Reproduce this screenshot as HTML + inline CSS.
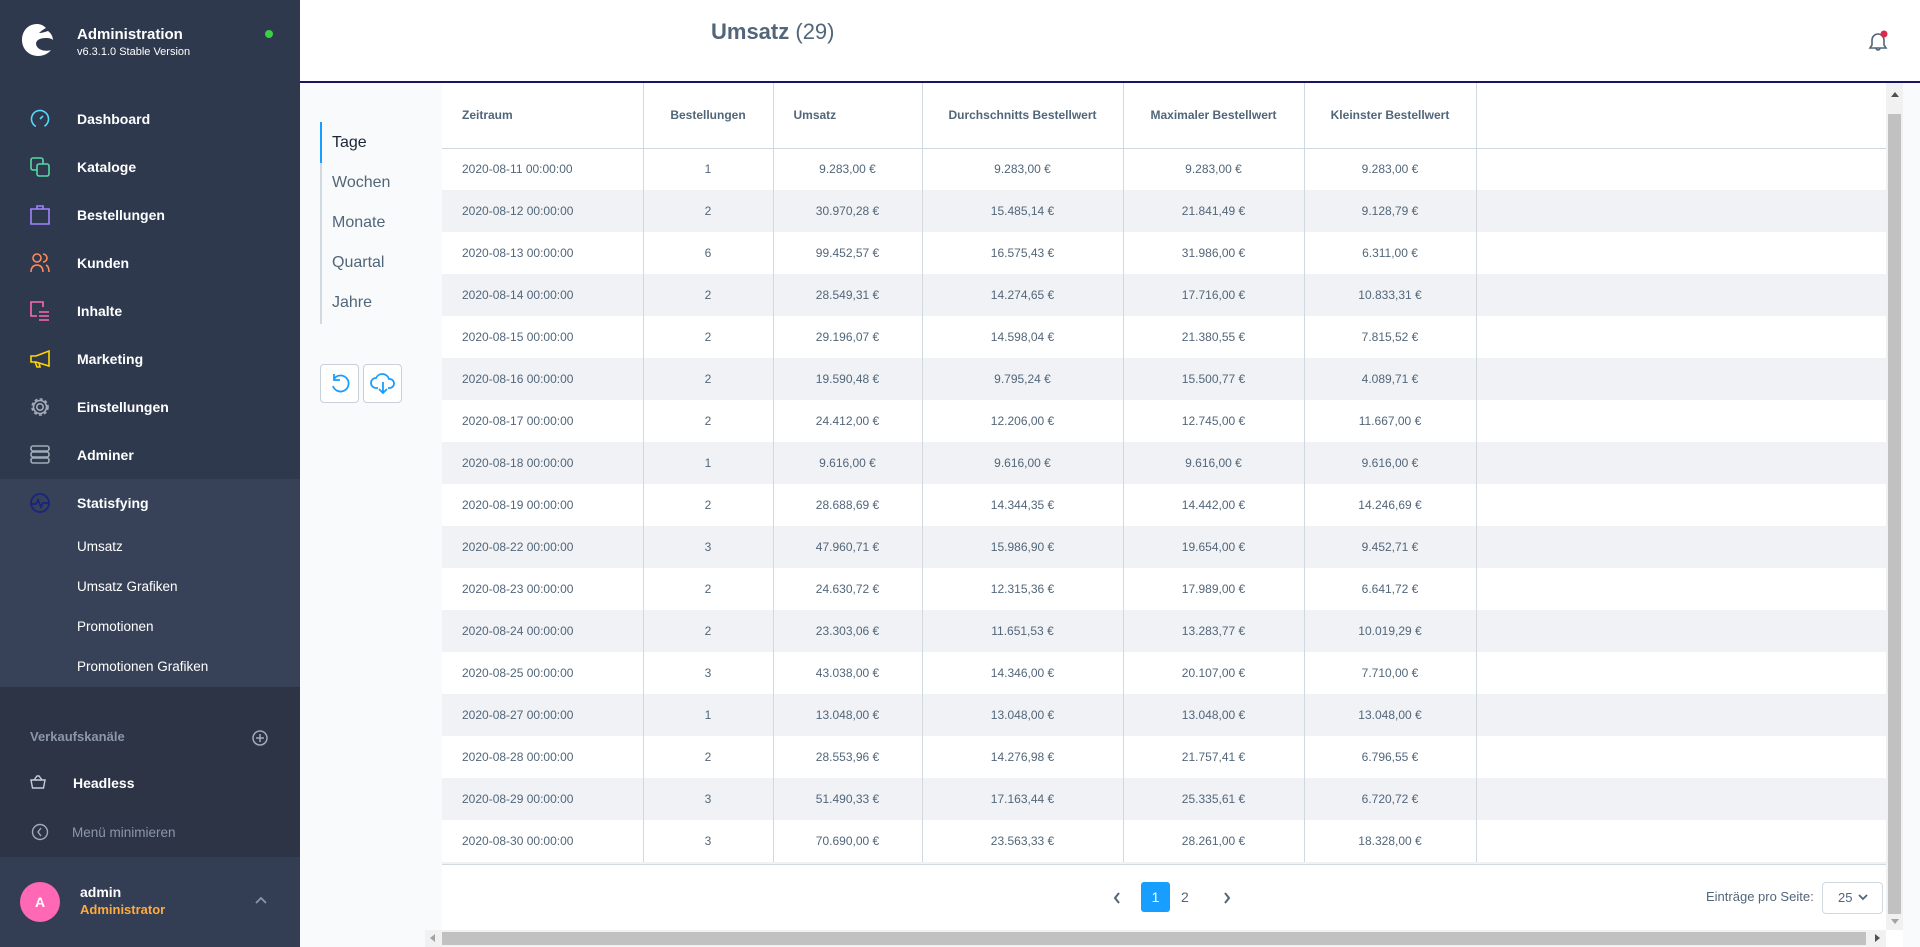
<!DOCTYPE html>
<html><head><meta charset="utf-8"><style>
*{box-sizing:border-box;margin:0;padding:0}
body{width:1920px;height:947px;overflow:hidden;font-family:"Liberation Sans",sans-serif;background:#fff;position:relative}
.sb{position:absolute;left:0;top:0;width:300px;height:947px;background:#2f394d}
.abs{position:absolute}
.mi{position:absolute;left:77px;color:#fff;font-weight:bold;font-size:14px;line-height:18px}
.ic{position:absolute;left:30px;width:20px;height:20px}
.sub{position:absolute;left:77px;color:#fff;font-size:13.5px}
table{border-collapse:collapse;table-layout:fixed}
td,th{height:42px;font-size:12px;color:#52667a;text-align:center;border-right:1px solid #d1d9e0;white-space:nowrap}
th{height:65px;font-weight:bold;border-bottom:1px solid #d1d9e0;font-size:12px}
td:first-child,th:first-child{text-align:left;padding-left:20px}
tr:nth-child(odd) td{background:#f0f2f5}
td:last-child,th:last-child{border-right:none}
.nav{position:absolute;left:332px;font-size:16px;color:#52667a}
</style></head><body>
<div class="sb">
 <svg class="abs" style="left:20px;top:22px" width="34" height="36" viewBox="0 0 34 36"><path d="M17 2C8 2 2 9 2 18s7 16 16 16c5 0 10-2 13-6-6 2-14 0-15-6 0-4 4-6 10-6 4 0 6 1 7 2 0-3-2-7-5-9-3 1-6 2-9 2 2-2 5-4 7-5-3-3-6-4-9-4z" fill="#fff"/></svg>
 <div class="abs" style="left:77px;top:26px;color:#fff;font-weight:bold;font-size:15px">Administration</div>
 <div class="abs" style="left:77px;top:46px;color:#fff;font-size:11px">v6.3.1.0 Stable Version</div>
 <div class="abs" style="left:265px;top:30px;width:8px;height:8px;border-radius:50%;background:#37d046"></div>

 <svg class="ic" style="top:109px" viewBox="0 0 20 20" fill="none" stroke="#57d9ff" stroke-width="1.6"><circle cx="10" cy="10" r="8.5" stroke-dasharray="44 9" transform="rotate(120 10 10)"/><path d="M10 10l3-3"/></svg>
 <div class="mi" style="top:110px">Dashboard</div>
 <svg class="ic" style="top:157px" viewBox="0 0 20 20" fill="none" stroke="#57d9a3" stroke-width="1.6"><rect x="1" y="1" width="12" height="12" rx="2"/><rect x="7" y="7" width="12" height="12" rx="2" fill="#2f394d"/></svg>
 <div class="mi" style="top:158px">Kataloge</div>
 <svg class="ic" style="top:205px" viewBox="0 0 20 20" fill="none" stroke="#9f86ff" stroke-width="1.6"><path d="M1 4h18v15H1z M7 4V1h6v3"/></svg>
 <div class="mi" style="top:206px">Bestellungen</div>
 <svg class="ic" style="top:253px" viewBox="0 0 20 20" fill="none" stroke="#ff8a5b" stroke-width="1.6"><circle cx="7" cy="5" r="4"/><path d="M1 19c0-5 3-7 6-7s6 2 6 7M13 1a4 4 0 010 8M16 12c2 1 3 3 3 7"/></svg>
 <div class="mi" style="top:254px">Kunden</div>
 <svg class="ic" style="top:301px" viewBox="0 0 20 20" fill="none" stroke="#ff68b4" stroke-width="1.6"><path d="M7 15H1V1h12v5M9 11h10M9 15h10M9 19h10"/></svg>
 <div class="mi" style="top:302px">Inhalte</div>
 <svg class="ic" style="top:349px" viewBox="0 0 20 20" fill="none" stroke="#ffd700" stroke-width="1.6"><path d="M1 7h5l13-5v15L6 13H1z M5 13l2 5h3l-1-4"/></svg>
 <div class="mi" style="top:350px">Marketing</div>
 <svg class="ic" style="top:397px" viewBox="0 0 20 20" fill="none" stroke="#a2abb7" stroke-width="1.6"><circle cx="10" cy="10" r="3.2"/><circle cx="10" cy="10" r="8" stroke-dasharray="3 2.3"/><circle cx="10" cy="10" r="6.5"/></svg>
 <div class="mi" style="top:398px">Einstellungen</div>
 <svg class="ic" style="top:445px" viewBox="0 0 20 20" fill="none" stroke="#a2abb7" stroke-width="1.6"><rect x="1" y="1" width="18" height="5" rx="2"/><rect x="1" y="7" width="18" height="5" rx="2"/><rect x="1" y="13" width="18" height="5" rx="2"/></svg>
 <div class="mi" style="top:446px">Adminer</div>

 <div class="abs" style="left:0;top:479px;width:300px;height:208px;background:#374157"></div>
 <svg class="ic" style="top:493px" viewBox="0 0 20 20" fill="none" stroke="#1a237e" stroke-width="1.8"><circle cx="10" cy="10" r="9"/><path d="M2 11h4l2-4 3 7 2-4h5"/></svg>
 <div class="mi" style="top:494px">Statisfying</div>
 <div class="sub" style="top:539px">Umsatz</div>
 <div class="sub" style="top:579px">Umsatz Grafiken</div>
 <div class="sub" style="top:619px">Promotionen</div>
 <div class="sub" style="top:659px">Promotionen Grafiken</div>

 <div class="abs" style="left:0;top:687px;width:300px;height:170px;background:#2c3446"></div>
 <div class="abs" style="left:30px;top:729px;color:#8a98aa;font-weight:bold;font-size:13px">Verkaufskanäle</div>
 <svg class="abs" style="left:252px;top:730px" width="16" height="16" viewBox="0 0 16 16" fill="none" stroke="#a2abb7" stroke-width="1.5"><circle cx="8" cy="8" r="7"/><path d="M8 4v8M4 8h8"/></svg>
 <svg class="abs" style="left:30px;top:775px" width="16" height="14" viewBox="0 0 16 14" fill="none" stroke="#c6ced8" stroke-width="1.4"><path d="M1 5h14l-1.5 8h-11z M4 5l3-4h2l3 4"/></svg>
 <div class="mi" style="left:73px;top:774px">Headless</div>
 <svg class="abs" style="left:31px;top:823px" width="18" height="18" viewBox="0 0 18 18" fill="none" stroke="#a2abb7" stroke-width="1.4"><circle cx="9" cy="9" r="7.5"/><path d="M10 5L7 9l3 4"/></svg>
 <div class="abs" style="left:72px;top:825px;color:#8a98aa;font-size:13.5px">Menü minimieren</div>

 <div class="abs" style="left:0;top:857px;width:300px;height:90px;background:#333d54"></div>
 <div class="abs" style="left:20px;top:882px;width:40px;height:40px;border-radius:50%;background:#ff68b4;color:#fff;font-weight:bold;font-size:14px;text-align:center;line-height:40px">A</div>
 <div class="abs" style="left:80px;top:884px;color:#fff;font-weight:bold;font-size:14px">admin</div>
 <div class="abs" style="left:80px;top:902px;color:#ffab40;font-weight:bold;font-size:13px">Administrator</div>
 <svg class="abs" style="left:255px;top:896px" width="12" height="8" viewBox="0 0 12 8" fill="none" stroke="#8a98aa" stroke-width="1.8"><path d="M1 7l5-5 5 5"/></svg>
</div>

<div class="abs" style="left:300px;top:0;width:1620px;height:82px;background:#fff"></div>
<div class="abs" style="left:711px;top:19px;font-size:22px;color:#52667a"><b>Umsatz</b> (29)</div>
<svg class="abs" style="left:1866px;top:30px" width="24" height="24" viewBox="0 0 24 24" fill="none" stroke="#52667a" stroke-width="1.6"><path d="M4 18h16l-2-3v-5a6 6 0 00-12 0v5z M10 18a2 2 0 004 0"/><circle cx="18" cy="4" r="3.5" fill="#de294c" stroke="none"/></svg>
<div class="abs" style="left:300px;top:81px;width:1620px;height:2px;background:#1b1464"></div>

<div class="abs" style="left:300px;top:83px;width:142px;height:864px;background:#f9fafb"></div>
<div class="abs" style="left:320px;top:122px;width:2px;height:202px;background:#d1d9e0"></div>
<div class="abs" style="left:320px;top:122px;width:2px;height:41px;background:#189eff"></div>
<div class="nav" style="top:134px;color:#1b2636">Tage</div>
<div class="nav" style="top:174px">Wochen</div>
<div class="nav" style="top:214px">Monate</div>
<div class="nav" style="top:254px">Quartal</div>
<div class="nav" style="top:294px">Jahre</div>
<div class="abs" style="left:320px;top:364px;width:39px;height:39px;border:1px solid #c8d0da;border-radius:4px;background:#fff"></div>
<svg class="abs" style="left:329px;top:373px" width="22" height="22" viewBox="0 0 22 22" fill="none" stroke="#189eff" stroke-width="1.8"><path d="M5 6a8 8 0 11-1 7"/><path d="M5 1v6h6"/></svg>
<div class="abs" style="left:363px;top:364px;width:39px;height:39px;border:1px solid #c8d0da;border-radius:4px;background:#fff"></div>
<svg class="abs" style="left:370px;top:373px" width="26" height="22" viewBox="0 0 26 22" fill="none" stroke="#189eff" stroke-width="1.8"><path d="M8 15H6a5 5 0 010-10 7 7 0 0113 1 4.5 4.5 0 011 9h-2"/><path d="M13 9v11M9 16l4 4 4-4"/></svg>

<div class="abs" style="left:442px;top:83px;width:1444px;height:779px;overflow:hidden">
<table style="width:1444px">
<colgroup><col style="width:201px"><col style="width:130px"><col style="width:149px"><col style="width:201px"><col style="width:181px"><col style="width:172px"><col></colgroup>
<tr><th>Zeitraum</th><th>Bestellungen</th><th style="text-align:left;padding-left:20px">Umsatz</th><th>Durchschnitts Bestellwert</th><th>Maximaler Bestellwert</th><th>Kleinster Bestellwert</th><th></th></tr>
<tr><td>2020-08-11 00:00:00</td><td>1</td><td>9.283,00 €</td><td>9.283,00 €</td><td>9.283,00 €</td><td>9.283,00 €</td><td></td></tr>
<tr><td>2020-08-12 00:00:00</td><td>2</td><td>30.970,28 €</td><td>15.485,14 €</td><td>21.841,49 €</td><td>9.128,79 €</td><td></td></tr>
<tr><td>2020-08-13 00:00:00</td><td>6</td><td>99.452,57 €</td><td>16.575,43 €</td><td>31.986,00 €</td><td>6.311,00 €</td><td></td></tr>
<tr><td>2020-08-14 00:00:00</td><td>2</td><td>28.549,31 €</td><td>14.274,65 €</td><td>17.716,00 €</td><td>10.833,31 €</td><td></td></tr>
<tr><td>2020-08-15 00:00:00</td><td>2</td><td>29.196,07 €</td><td>14.598,04 €</td><td>21.380,55 €</td><td>7.815,52 €</td><td></td></tr>
<tr><td>2020-08-16 00:00:00</td><td>2</td><td>19.590,48 €</td><td>9.795,24 €</td><td>15.500,77 €</td><td>4.089,71 €</td><td></td></tr>
<tr><td>2020-08-17 00:00:00</td><td>2</td><td>24.412,00 €</td><td>12.206,00 €</td><td>12.745,00 €</td><td>11.667,00 €</td><td></td></tr>
<tr><td>2020-08-18 00:00:00</td><td>1</td><td>9.616,00 €</td><td>9.616,00 €</td><td>9.616,00 €</td><td>9.616,00 €</td><td></td></tr>
<tr><td>2020-08-19 00:00:00</td><td>2</td><td>28.688,69 €</td><td>14.344,35 €</td><td>14.442,00 €</td><td>14.246,69 €</td><td></td></tr>
<tr><td>2020-08-22 00:00:00</td><td>3</td><td>47.960,71 €</td><td>15.986,90 €</td><td>19.654,00 €</td><td>9.452,71 €</td><td></td></tr>
<tr><td>2020-08-23 00:00:00</td><td>2</td><td>24.630,72 €</td><td>12.315,36 €</td><td>17.989,00 €</td><td>6.641,72 €</td><td></td></tr>
<tr><td>2020-08-24 00:00:00</td><td>2</td><td>23.303,06 €</td><td>11.651,53 €</td><td>13.283,77 €</td><td>10.019,29 €</td><td></td></tr>
<tr><td>2020-08-25 00:00:00</td><td>3</td><td>43.038,00 €</td><td>14.346,00 €</td><td>20.107,00 €</td><td>7.710,00 €</td><td></td></tr>
<tr><td>2020-08-27 00:00:00</td><td>1</td><td>13.048,00 €</td><td>13.048,00 €</td><td>13.048,00 €</td><td>13.048,00 €</td><td></td></tr>
<tr><td>2020-08-28 00:00:00</td><td>2</td><td>28.553,96 €</td><td>14.276,98 €</td><td>21.757,41 €</td><td>6.796,55 €</td><td></td></tr>
<tr><td>2020-08-29 00:00:00</td><td>3</td><td>51.490,33 €</td><td>17.163,44 €</td><td>25.335,61 €</td><td>6.720,72 €</td><td></td></tr>
<tr><td>2020-08-30 00:00:00</td><td>3</td><td>70.690,00 €</td><td>23.563,33 €</td><td>28.261,00 €</td><td>18.328,00 €</td><td></td></tr>
</table></div>
<div class="abs" style="left:442px;top:862px;width:1444px;height:3px;background:#f0f2f5;border-bottom:1px solid #d1d9e0"></div>

<svg class="abs" style="left:1112px;top:891px" width="10" height="14" viewBox="0 0 10 14" fill="none" stroke="#52667a" stroke-width="2"><path d="M7 2L3 7l4 5"/></svg>
<div class="abs" style="left:1141px;top:882px;width:29px;height:30px;border-radius:3px;background:#189eff;color:#fff;font-size:14px;text-align:center;line-height:30px">1</div>
<div class="abs" style="left:1181px;top:882px;width:14px;color:#52667a;font-size:14px;line-height:30px">2</div>
<svg class="abs" style="left:1222px;top:891px" width="10" height="14" viewBox="0 0 10 14" fill="none" stroke="#52667a" stroke-width="2"><path d="M3 2l4 5-4 5"/></svg>
<div class="abs" style="left:1706px;top:889px;color:#52667a;font-size:13px">Einträge pro Seite:</div>
<div class="abs" style="left:1822px;top:882px;width:61px;height:32px;border:1px solid #d1d9e0;border-radius:4px;color:#52667a;font-size:13px;line-height:30px;padding-left:15px">25</div>
<svg class="abs" style="left:1858px;top:893px" width="10" height="8" viewBox="0 0 10 8" fill="none" stroke="#52667a" stroke-width="1.8"><path d="M1 2l4 4 4-4"/></svg>

<div class="abs" style="left:1886px;top:83px;width:17px;height:847px;background:#f1f1f1"></div>
<div class="abs" style="left:1888px;top:114px;width:13px;height:800px;background:#c1c1c1"></div>
<div class="abs" style="left:1891px;top:92px;width:0;height:0;border-left:4px solid transparent;border-right:4px solid transparent;border-bottom:5px solid #505050"></div>
<div class="abs" style="left:1891px;top:919px;width:0;height:0;border-left:4px solid transparent;border-right:4px solid transparent;border-top:5px solid #a3a3a3"></div>
<div class="abs" style="left:1903px;top:83px;width:17px;height:864px;background:#f9fafb"></div>
<div class="abs" style="left:425px;top:930px;width:1461px;height:17px;background:#f1f1f1"></div>
<div class="abs" style="left:442px;top:932px;width:1424px;height:13px;background:#c1c1c1"></div>
<div class="abs" style="left:430px;top:934px;width:0;height:0;border-top:4px solid transparent;border-bottom:4px solid transparent;border-right:5px solid #a3a3a3"></div>
<div class="abs" style="left:1875px;top:934px;width:0;height:0;border-top:4px solid transparent;border-bottom:4px solid transparent;border-left:5px solid #505050"></div>
</body></html>
